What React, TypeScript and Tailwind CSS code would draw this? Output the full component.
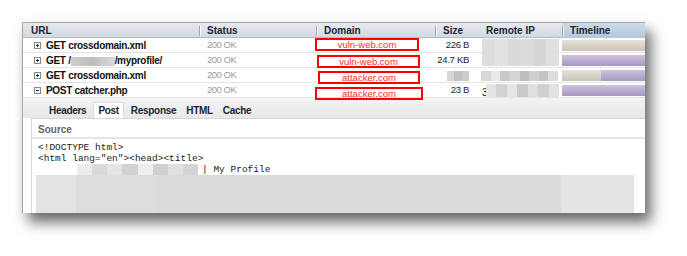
const sans = { fontFamily: '"Liberation Sans", Arial, sans-serif' };

type Row = {
  url: React.ReactNode;
  expanded?: boolean;
  domain: string;
  box: string;
  size?: string;
  ip: React.ReactNode;
  bar: React.ReactNode;
};

function Expander({ open }: { open?: boolean }) {
  return (
    <span className="w-[7px] h-[7px] border border-[#8a8a8a] bg-[#f4f4f4] flex items-center justify-center relative shrink-0">
      <span className="absolute w-[3px] h-px bg-[#333]" />
      {!open && <span className="absolute w-px h-[3px] bg-[#333]" />}
    </span>
  );
}

function Blur({ cols, className }: { cols: string[]; className: string }) {
  return (
    <div className={`absolute flex ${className}`}>
      {cols.map((c, i) => (
        <div key={i} className="flex-1 h-full" style={{ background: c }} />
      ))}
    </div>
  );
}

const beige = "bg-gradient-to-b from-[#e6e1d9] to-[#cbc3b7]";
const purple = "bg-gradient-to-b from-[#cdc2dd] to-[#a898c2]";

const rows: Row[] = [
  {
    url: "GET crossdomain.xml",
    domain: "vuln-web.com",
    box: "left-[-1px] top-0 w-[104px]",
    size: "226 B",
    ip: (
      <Blur
        className="left-[7px] top-[1px] w-[77px] h-[27px] z-10"
        cols={["#dedede", "#e2e2e2", "#d9d9d9", "#dcdcdc", "#d6d6d6", "#e0e0e0"]}
      />
    ),
    bar: <div className={`h-[11px] w-full ${beige}`} />,
  },
  {
    url: (
      <>
        GET /
        <span className="inline-block w-[44px] h-[9px] align-middle bg-gradient-to-r from-[#cfcfcf] via-[#bdbdbd] to-[#dadada]" />
        /myprofile/
      </>
    ),
    domain: "vuln-web.com",
    box: "left-px top-[2px] w-[103px]",
    size: "24.7 KB",
    ip: null,
    bar: <div className={`h-[11px] w-full ${purple}`} />,
  },
  {
    url: "GET crossdomain.xml",
    domain: "attacker.com",
    box: "left-[2px] top-[3px] w-[102px]",
    ip: (
      <Blur
        className="left-[6px] top-[3px] w-[77px] h-[10px]"
        cols={["#d8d8d8", "#e8e8e8", "#c9c9c9", "#d4d4d4", "#bdbdbd", "#cfcfcf", "#c4c4c4", "#dcdcdc"]}
      />
    ),
    bar: (
      <div className="h-[11px] w-full flex">
        <div className={`w-[39px] h-full ${beige}`} />
        <div className={`flex-1 h-full ${purple}`} />
      </div>
    ),
  },
  {
    url: "POST catcher.php",
    expanded: true,
    domain: "attacker.com",
    box: "left-[-1px] top-[4px] w-[108px]",
    size: "23 B",
    ip: (
      <>
        <span className="absolute left-[7px] top-[2px] text-[10px] text-[#222]">3</span>
        <Blur
          className="left-[11px] top-[1px] w-[73px] h-[13px]"
          cols={["#e4e4e4", "#d3d3d3", "#e6e6e6", "#cbcbcb", "#dedede", "#d0d0d0", "#e2e2e2"]}
        />
      </>
    ),
    bar: <div className={`h-[11px] w-full ${purple}`} />,
  },
];

const cols = "grid grid-cols-[176px_117px_119px_40px_87px_84px]";

function HeadCell({ label, divider = true, className = "" }: { label: string; divider?: boolean; className?: string }) {
  return (
    <div className={`flex items-center h-full relative ${className}`}>
      {divider && <span className="absolute left-0 top-[3px] w-px h-[10px] bg-[#9aa3ad] shadow-[1px_0_0_#fff]" />}
      <span className="pl-[8px] text-[10px] font-bold text-[#1d2530]">{label}</span>
    </div>
  );
}

export default function App() {
  return (
    <div className="w-[687px] h-[256px] bg-white pt-[22px] pl-[22px]" style={sans}>
      <div className="w-[623px] h-[191px] bg-white border-l border-t border-[#a9a9a9] shadow-[6px_9px_13px_rgba(0,0,0,0.6)] overflow-hidden flex flex-col">
        <div className={`${cols} h-[15px] bg-gradient-to-b from-[#e6eaef] to-[#d2d9e1] border-b border-[#b3bcc6] shrink-0`}>
          <HeadCell label="URL" divider={false} />
          <HeadCell label="Status" />
          <HeadCell label="Domain" />
          <HeadCell label="Size" />
          <div className="flex items-center h-full">
            <span className="pl-[11px] text-[10px] font-bold text-[#1d2530]">Remote IP</span>
          </div>
          <HeadCell label="Timeline" className="bg-gradient-to-b from-[#cbdbea] to-[#b3c8dc]" />
        </div>

        {rows.map((r, i) => (
          <div key={i} className={`${cols} h-[15px] border-b border-[#e4e4e4] shrink-0`}>
            <div className="flex items-center gap-[5px] pl-[11px]">
              <Expander open={r.expanded} />
              <span className="text-[10px] font-bold text-[#111] tracking-[-0.3px] whitespace-nowrap">{r.url}</span>
            </div>
            <div className="flex items-center pl-[8px] text-[9.5px] text-[#9a9a9a] tracking-[-0.5px]">200 OK</div>
            <div className="relative">
              <div className={`absolute h-[13px] border-2 border-[#ff0000] flex items-center justify-center z-20 ${r.box}`}>
                <span className="text-[9.5px] text-[#ff2a2a] leading-none">{r.domain}</span>
              </div>
            </div>
            <div className="relative flex items-center justify-end pr-[6px] text-[9.5px] text-[#222] tracking-[-0.3px] whitespace-nowrap">
              {r.size ?? (
                <Blur className="right-[6px] top-[3px] w-[22px] h-[10px]" cols={["#d6d6d6", "#c2c2c2", "#cdcdcd"]} />
              )}
            </div>
            <div className="relative">{r.ip}</div>
            <div className="flex items-center">{r.bar}</div>
          </div>
        ))}

        <div className="h-[20px] shrink-0 bg-gradient-to-b from-[#f3f3f3] to-[#e8e8e8] flex items-end pl-[21px]">
          {["Headers", "Post", "Response", "HTML", "Cache"].map((t) => (
            <div
              key={t}
              className={`h-[16px] px-[4px] flex items-center text-[10px] font-bold text-[#1d2530] tracking-[-0.3px] rounded-t-[2px] ${
                t === "Post" ? "bg-white border border-b-0 border-[#dcdcdc] mx-[2px]" : "mx-px"
              }`}
            >
              {t}
            </div>
          ))}
        </div>

        <div className="flex-1 ml-[8px] border-l border-t border-[#d6d6d6] bg-white flex flex-col min-h-0">
          <div className="h-[20px] shrink-0 border-b-2 border-[#e6e6e6] flex items-center pl-[6px] pt-[2px] text-[10px] font-bold text-[#666]">
            Source
          </div>
          <div
            className="pl-[6px] pt-[3px] text-[9.5px] leading-[11px] text-[#222] whitespace-pre"
            style={{ fontFamily: '"Liberation Mono", "Courier New", monospace' }}
          >
            <div>{"<!DOCTYPE html>"}</div>
            <div>{'<html lang="en"><head><title>'}</div>
            <div className="flex items-center h-[11px]">
              <span className="w-[39px]" />
              <span className="flex w-[121px] h-[11px]">
                {["#ececec", "#d9d9d9", "#e4e4e4", "#d2d2d2", "#eeeeee", "#cfcfcf", "#e0e0e0", "#d5d5d5"].map((c, i) => (
                  <span key={i} className="flex-1 h-full" style={{ background: c }} />
                ))}
              </span>
              <span className="pl-[4px]">| My Profile</span>
            </div>
          </div>
          <div className="flex-1 ml-[4px] w-[598px] flex">
            <div className="w-[40px] bg-[#e3e3e3]" />
            <div className="w-[80px] bg-[#dddddd]" />
            <div className="flex-1 bg-[#dbdbdb]" />
            <div className="w-[73px] bg-[#e4e4e4]" />
          </div>
        </div>
      </div>
    </div>
  );
}
